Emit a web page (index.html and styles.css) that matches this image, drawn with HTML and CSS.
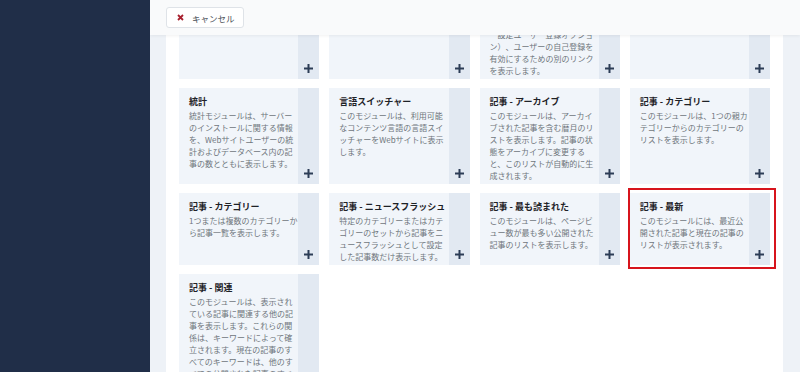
FILE: index.html
```html
<!DOCTYPE html>
<html lang="ja">
<head>
    <meta charset="UTF-8">
    <meta name="viewport" content="width=device-width, initial-scale=1.0">
    <title>モジュールの選択</title>
    <link rel="stylesheet" href="styles.css">
</head>
<body>
    <div class="layout">
        <aside class="sidebar"></aside>

        <main class="main">
            <div class="toolbar">
                <button class="btn-cancel">
                    <svg class="icon-x" width="7" height="7" viewBox="0 0 7 7"><path d="M1 1L6 6M6 1L1 6"/></svg>
                    キャンセル
                </button>
            </div>

            <div class="panel">
                <div class="module-grid">
                    <a class="module" href="#">
                        <div class="module-body">
                            <h3 class="module-title">メニュー</h3>
                            <p class="module-desc">このモジュールは、フロントエンドにメニューを表示します。</p>
                        </div>
                        <span class="module-add"><svg width="9" height="9" viewBox="0 0 9 9"><path d="M4.5 0V9M0 4.5H9"/></svg></span>
                    </a>
                    <a class="module" href="#">
                        <div class="module-body">
                            <h3 class="module-title">ブレッドクラム</h3>
                            <p class="module-desc">このモジュールは、ブレッドクラム（パンくずリスト）を表示します。</p>
                        </div>
                        <span class="module-add"><svg width="9" height="9" viewBox="0 0 9 9"><path d="M4.5 0V9M0 4.5H9"/></svg></span>
                    </a>
                    <a class="module" href="#">
                        <div class="module-body">
                            <h3 class="module-title">ログイン</h3>
                            <p class="module-desc">このモジュールは、ユーザー名とパスワードのログインフォームを表示します。ユーザー登録が有効な場合（ユーザー設定ユーザー登録オプション）、ユーザーの自己登録を有効にするための別のリンクを表示します。</p>
                        </div>
                        <span class="module-add"><svg width="9" height="9" viewBox="0 0 9 9"><path d="M4.5 0V9M0 4.5H9"/></svg></span>
                    </a>
                    <a class="module" href="#">
                        <div class="module-body">
                            <h3 class="module-title">検索</h3>
                            <p class="module-desc">このモジュールは、検索ボックスを表示します。</p>
                        </div>
                        <span class="module-add"><svg width="9" height="9" viewBox="0 0 9 9"><path d="M4.5 0V9M0 4.5H9"/></svg></span>
                    </a>

                    <a class="module" href="#">
                        <div class="module-body">
                            <h3 class="module-title">統計</h3>
                            <p class="module-desc">統計モジュールは、サーバーのインストールに関する情報を、Webサイトユーザーの統計およびデータベース内の記事の数とともに表示します。</p>
                        </div>
                        <span class="module-add"><svg width="9" height="9" viewBox="0 0 9 9"><path d="M4.5 0V9M0 4.5H9"/></svg></span>
                    </a>
                    <a class="module" href="#">
                        <div class="module-body">
                            <h3 class="module-title">言語スイッチャー</h3>
                            <p class="module-desc">このモジュールは、利用可能なコンテンツ言語の言語スイッチャーをWebサイトに表示します。</p>
                        </div>
                        <span class="module-add"><svg width="9" height="9" viewBox="0 0 9 9"><path d="M4.5 0V9M0 4.5H9"/></svg></span>
                    </a>
                    <a class="module" href="#">
                        <div class="module-body">
                            <h3 class="module-title">記事 - アーカイブ</h3>
                            <p class="module-desc">このモジュールは、アーカイブされた記事を含む暦月のリストを表示します。記事の状態をアーカイブに変更すると、このリストが自動的に生成されます。</p>
                        </div>
                        <span class="module-add"><svg width="9" height="9" viewBox="0 0 9 9"><path d="M4.5 0V9M0 4.5H9"/></svg></span>
                    </a>
                    <a class="module" href="#">
                        <div class="module-body">
                            <h3 class="module-title">記事 - カテゴリー</h3>
                            <p class="module-desc">このモジュールは、1つの親カテゴリーからのカテゴリーのリストを表示します。</p>
                        </div>
                        <span class="module-add"><svg width="9" height="9" viewBox="0 0 9 9"><path d="M4.5 0V9M0 4.5H9"/></svg></span>
                    </a>

                    <a class="module" href="#">
                        <div class="module-body">
                            <h3 class="module-title">記事 - カテゴリー</h3>
                            <p class="module-desc">1つまたは複数のカテゴリーから記事一覧を表示します。</p>
                        </div>
                        <span class="module-add"><svg width="9" height="9" viewBox="0 0 9 9"><path d="M4.5 0V9M0 4.5H9"/></svg></span>
                    </a>
                    <a class="module" href="#">
                        <div class="module-body">
                            <h3 class="module-title">記事 - ニュースフラッシュ</h3>
                            <p class="module-desc">特定のカテゴリーまたはカテゴリーのセットから記事をニュースフラッシュとして設定した記事数だけ表示します。</p>
                        </div>
                        <span class="module-add"><svg width="9" height="9" viewBox="0 0 9 9"><path d="M4.5 0V9M0 4.5H9"/></svg></span>
                    </a>
                    <a class="module" href="#">
                        <div class="module-body">
                            <h3 class="module-title">記事 - 最も読まれた</h3>
                            <p class="module-desc">このモジュールは、ページビュー数が最も多い公開された記事のリストを表示します。</p>
                        </div>
                        <span class="module-add"><svg width="9" height="9" viewBox="0 0 9 9"><path d="M4.5 0V9M0 4.5H9"/></svg></span>
                    </a>
                    <a class="module selected" href="#">
                        <div class="module-body">
                            <h3 class="module-title">記事 - 最新</h3>
                            <p class="module-desc">このモジュールには、最近公開された記事と現在の記事のリストが表示されます。</p>
                        </div>
                        <span class="module-add"><svg width="9" height="9" viewBox="0 0 9 9"><path d="M4.5 0V9M0 4.5H9"/></svg></span>
                    </a>

                    <a class="module" href="#">
                        <div class="module-body">
                            <h3 class="module-title">記事 - 関連</h3>
                            <p class="module-desc">このモジュールは、表示されている記事に関連する他の記事を表示します。これらの関係は、キーワードによって確立されます。現在の記事のすべてのキーワードは、他のすべての公開された記事のすべてのキーワードと照合されます。</p>
                        </div>
                        <span class="module-add"><svg width="9" height="9" viewBox="0 0 9 9"><path d="M4.5 0V9M0 4.5H9"/></svg></span>
                    </a>
                </div>
            </div>
        </main>
    </div>
</body>
</html>
```

FILE: styles.css
```css
* {
    box-sizing: border-box;
}
body {
    margin: 0;
    font-family: "Noto Sans CJK JP", "Noto Sans", sans-serif;
}
.layout {
    display: flex;
    height: 372px;
    overflow: hidden;
}
.sidebar {
    width: 150px;
    flex-shrink: 0;
    background: #202e48;
}
.main {
    flex: 1;
    position: relative;
    background: #eef2f7;
    padding: 0 17px 0 16px;
    overflow: hidden;
}
.toolbar {
    position: absolute;
    top: 0;
    left: 0;
    right: 0;
    height: 35px;
    padding: 7px 16px;
    background: #f9fafb;
    box-shadow: 0 1px 3px rgba(0, 0, 0, 0.06);
    z-index: 2;
}
.btn-cancel {
    height: 21px;
    padding: 0 8px 0 10px;
    display: flex;
    align-items: center;
    gap: 8px;
    background: #fff;
    border: 1px solid #dfe3e8;
    border-radius: 3px;
    font-family: "Noto Sans CJK JP", sans-serif;
    font-size: 8.5px;
    color: #4b5057;
    cursor: pointer;
}
.icon-x path {
    stroke: #a8202e;
    stroke-width: 1.8;
    fill: none;
}
.panel {
    height: 100%;
    padding: 0 13px;
    background: #fff;
    overflow: hidden;
}
.module-grid {
    display: grid;
    grid-template-columns: repeat(4, 1fr);
    column-gap: 10px;
    row-gap: 9px;
    margin-top: -41px;
}
.module {
    display: grid;
    grid-template-columns: 1fr 21px;
    position: relative;
    background: #f1f5fa;
    text-decoration: none;
}
.module-body {
    padding: 7px 0 2px 10px;
}
.module-title {
    margin: 0 0 2px;
    font-size: 9px;
    font-weight: 700;
    line-height: 13px;
    color: #1e2227;
}
.module-desc {
    margin: 0;
    font-size: 8px;
    line-height: 12px;
    color: #6f757c;
    text-spacing-trim: space-all;
}
.module-add {
    display: flex;
    align-items: flex-end;
    justify-content: center;
    padding-bottom: 6px;
    background: #e2e9f2;
}
.module-add path {
    stroke: #2c3d56;
    stroke-width: 2;
}
.module.selected::after {
    content: "";
    position: absolute;
    top: -5px;
    left: -2px;
    right: -6px;
    bottom: -4px;
    border: 2px solid #d7141c;
}
```
